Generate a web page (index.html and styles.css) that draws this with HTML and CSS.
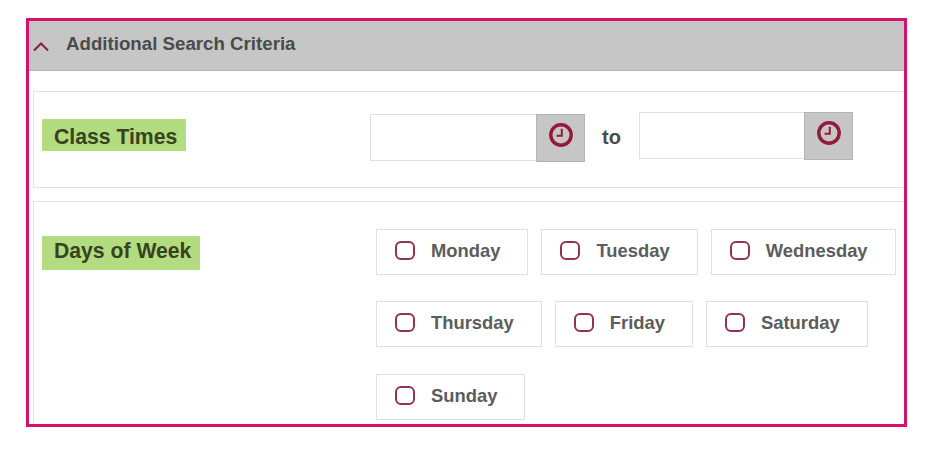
FILE: index.html
```html
<!DOCTYPE html>
<html lang="en">
<head>
<meta charset="utf-8">
<title>Additional Search Criteria</title>
<link rel="stylesheet" href="styles.css">
</head>
<body>
<main class="frame">
  <header class="panel-head">
    <svg class="chevron" width="18" height="11" viewBox="0 0 18 11"><path d="M2 9.5 9 2.5l7 7" fill="none" stroke="#8f1d3c" stroke-width="2"/></svg>
    <h2 class="panel-title">Additional Search Criteria</h2>
  </header>
  <section class="block block-times">
    <div class="label-col"><span class="tag tag-times">Class Times</span></div>
    <div class="times">
      <div class="time-field time-first">
        <input class="time-input time-input-first" type="text" aria-label="From">
        <button class="clock-btn" type="button" aria-label="Pick start time">
          <svg width="26" height="26" viewBox="0 0 26 26"><circle cx="13" cy="13" r="10.2" fill="none" stroke="#94193a" stroke-width="3.4"/><path d="M13.8 6.8v6.9H8.6" fill="none" stroke="#94193a" stroke-width="2"/></svg>
        </button>
      </div>
      <span class="to">to</span>
      <div class="time-field">
        <input class="time-input time-input-second" type="text" aria-label="To">
        <button class="clock-btn" type="button" aria-label="Pick end time">
          <svg width="26" height="26" viewBox="0 0 26 26"><circle cx="13" cy="13" r="10.2" fill="none" stroke="#94193a" stroke-width="3.4"/><path d="M13.8 6.8v6.9H8.6" fill="none" stroke="#94193a" stroke-width="2"/></svg>
        </button>
      </div>
    </div>
  </section>
  <section class="block block-days">
    <div class="label-col"><span class="tag tag-days">Days of Week</span></div>
    <div class="days">
      <label class="day"><span class="box"></span>Monday</label>
      <label class="day"><span class="box"></span>Tuesday</label>
      <label class="day"><span class="box"></span>Wednesday</label>
      <label class="day"><span class="box"></span>Thursday</label>
      <label class="day"><span class="box"></span>Friday</label>
      <label class="day"><span class="box"></span>Saturday</label>
      <label class="day day-last"><span class="box"></span>Sunday</label>
    </div>
  </section>
</main>
</body>
</html>
```
FILE: styles.css
```css
* { box-sizing: border-box; }
html, body { margin: 0; padding: 0; background: #fff; }
body { font-family: "Liberation Sans", Arial, sans-serif; }
.frame {
  width: 881px;
  height: 409px;
  margin: 18px 0 0 26px;
  border: 3px solid #d4126f;
  overflow: hidden;
}
.panel-head {
  height: 50px;
  background: #c6c6c6;
  border-bottom: 1px solid #b4b4b4;
  display: flex;
  align-items: center;
  padding: 0 0 4px 3px;
}
.chevron { display: block; margin-top: 6px; }
.panel-title {
  margin: 0 0 0 16px;
  font-size: 18.7px;
  font-weight: 700;
  color: #4b4b4b;
}
.block {
  margin-left: 4px;
  border: 1px solid #e4e4e4;
  border-right: 0;
  display: flex;
  align-items: flex-start;
}
.block-times { height: 97px; margin-top: 20px; padding-top: 20px; }
.block-days { height: 240px; margin-top: 13px; padding-top: 27px; }
.label-col { width: 336px; flex: none; padding-left: 8px; }
.tag {
  display: inline-block;
  background: #b2dc7f;
  color: #37431f;
  font-size: 21.2px;
  font-weight: 700;
  padding: 0 9px 0 12px;
}
.tag-times { height: 32px; line-height: 36px; margin-top: 7px; }
.tag-days { height: 34px; line-height: 30px; margin-top: 7px; }
.times { display: flex; align-items: flex-start; }
.time-field { display: flex; }
.time-first { margin-top: 2px; }
.time-input {
  height: 47px;
  border: 1px solid #e0e0e0;
  background: #fff;
  outline: none;
  padding: 0;
}
.time-input-first { width: 167px; }
.time-input-second { width: 166px; }
.clock-btn {
  width: 49px;
  height: 48px;
  margin: 0 0 0 -1px;
  padding: 0 0 7px;
  background: #c6c6c6;
  border: 1px solid #b4b4b4;
  display: flex;
  align-items: center;
  justify-content: center;
}
.clock-btn svg { display: block; }
.to {
  width: 54px;
  padding-right: 1px;
  text-align: center;
  font-size: 20px;
  font-weight: 700;
  color: #4b4b4b;
  line-height: 26px;
  margin-top: 12px;
}
.days {
  margin-left: 6px;
  width: 528px;
  display: flex;
  flex-wrap: wrap;
  column-gap: 13px;
  row-gap: 26px;
}
.day {
  height: 46px;
  display: flex;
  align-items: center;
  padding: 0 27px 3px 18px;
  border: 1px solid #e0e0e0;
  font-size: 18.4px;
  font-weight: 700;
  color: #5c5c5c;
}
.day-last { margin-top: 1px; }
.box {
  width: 20px;
  height: 19px;
  margin-right: 16px;
  border: 2.4px solid #8f3350;
  border-radius: 6px;
  background: #fff;
  flex: none;
}
```
